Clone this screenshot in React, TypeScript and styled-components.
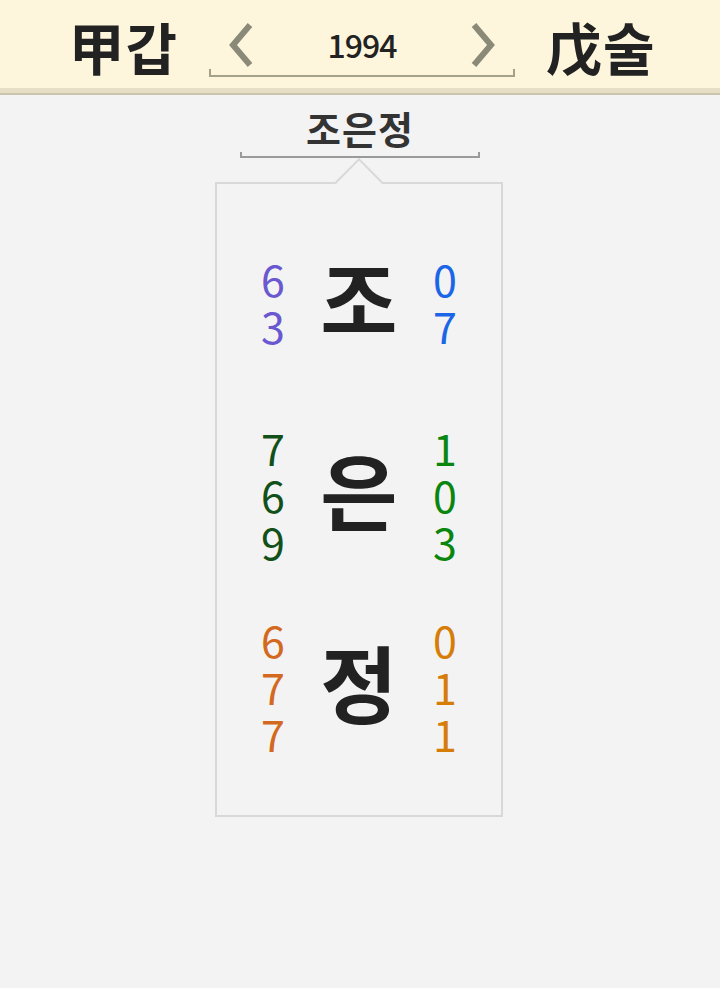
import React from "react"
import styled, { createGlobalStyle } from "styled-components"

const GlobalStyle = createGlobalStyle`
	html, body {
		margin: 0;
		padding: 0;
		background: #f3f3f3;
	}
	body {
		font-family: "Noto Sans CJK KR", "Noto Sans", sans-serif;
		color: #222;
	}
`

interface Syllable {
	char: string
	left: number[]
	right: number[]
	leftColor: string
	rightColor: string
}

const syllables: Syllable[] = [
	{ char: "조", left: [6, 3], right: [0, 7], leftColor: "#6a58d0", rightColor: "#1a66e6" },
	{ char: "은", left: [7, 6, 9], right: [1, 0, 3], leftColor: "#12501a", rightColor: "#0a860f" },
	{ char: "정", left: [6, 7, 7], right: [0, 1, 1], leftColor: "#d2691e", rightColor: "#d67d08" },
]

const Chevron = ({ dir }: { dir: "left" | "right" }) => (
	<ChevronSvg viewBox="0 0 26 46" width={26} height={46}>
		<polyline
			points={dir === "left" ? "22,3 5,23 22,43" : "4,3 21,23 4,43"}
			fill="none"
			stroke="#8b8a78"
			strokeWidth={6}
		/>
	</ChevronSvg>
)

export default function App() {
	return (
		<Page>
			<GlobalStyle />
			<Header>
				<Title>甲갑</Title>
				<YearPicker>
					<Chevron dir="left" />
					<Year>1994</Year>
					<Chevron dir="right" />
				</YearPicker>
				<Title>戊술</Title>
			</Header>
			<NameLabel>조은정</NameLabel>
			<NameBracket />
			<Panel>
				<Notch />
				{syllables.map((s) => (
					<Row key={s.char}>
						<Digits color={s.leftColor}>
							{s.left.map((d, i) => (
								<Digit key={i}>{d}</Digit>
							))}
						</Digits>
						<BigChar>{s.char}</BigChar>
						<Digits color={s.rightColor}>
							{s.right.map((d, i) => (
								<Digit key={i}>{d}</Digit>
							))}
						</Digits>
					</Row>
				))}
			</Panel>
		</Page>
	)
}

const Page = styled.div`
	min-height: 988px;
	display: flex;
	flex-direction: column;
	align-items: center;
`

const Header = styled.div`
	align-self: stretch;
	height: 88px;
	background: #fdf6dc;
	border-bottom: 5px solid #e6dfc6;
	box-shadow: 0 2px 0 #cbc4ad;
	display: flex;
	align-items: center;
	justify-content: center;
	gap: 31px;
	padding-left: 4px;
`

const Title = styled.div`
	font-size: 56px;
	font-weight: 700;
	line-height: 1;
	color: #222;
	margin-top: 4px;
	letter-spacing: 1px;
`

const YearPicker = styled.div`
	position: relative;
	width: 306px;
	height: 56px;
	margin-top: 10px;
	display: flex;
	align-items: center;
	justify-content: space-between;
	padding: 0 19px;
	box-sizing: border-box;
	&::after {
		content: "";
		position: absolute;
		left: 0;
		right: 0;
		bottom: 0;
		height: 6px;
		border: 2px solid #a4a08a;
		border-top: none;
	}
`

const ChevronSvg = styled.svg`
	display: block;
	margin-top: -8px;
`

const Year = styled.div`
	font-size: 32px;
	font-weight: 500;
	color: #222;
	margin-top: -10px;
	letter-spacing: -1px;
`

const NameLabel = styled.div`
	margin-top: 12px;
	font-size: 38px;
	font-weight: 700;
	line-height: 46px;
	color: #333;
	letter-spacing: 1px;
`

const NameBracket = styled.div`
	width: 240px;
	height: 6px;
	margin-top: 1px;
	border: 2px solid #9a9a9a;
	border-top: none;
	box-sizing: border-box;
`

const Panel = styled.div`
	position: relative;
	margin-top: 24px;
	margin-right: 2px;
	width: 288px;
	box-sizing: border-box;
	border: 2px solid #d8d8d8;
	padding: 22px 0 33px;
	display: flex;
	flex-direction: column;
`

const Notch = styled.div`
	position: absolute;
	top: -19px;
	left: 50%;
	margin-left: -17px;
	width: 34px;
	height: 34px;
	box-sizing: border-box;
	background: #f3f3f3;
	border-top: 2px solid #d8d8d8;
	border-left: 2px solid #d8d8d8;
	transform: rotate(45deg);
`

const Row = styled.div`
	height: 192px;
	display: grid;
	grid-template-columns: 48px 84px 48px;
	column-gap: 20px;
	justify-content: center;
	align-items: center;
`

const Digits = styled.div<{ color: string }>`
	display: flex;
	flex-direction: column;
	align-items: center;
	color: ${(p) => p.color};
	font-size: 43px;
	font-weight: 400;
`

const Digit = styled.span`
	display: block;
	height: 47px;
	line-height: 47px;
`

const BigChar = styled.div`
	text-align: center;
	font-size: 84px;
	font-weight: 700;
	line-height: 1;
	color: #222;
	margin-top: -10px;
`
